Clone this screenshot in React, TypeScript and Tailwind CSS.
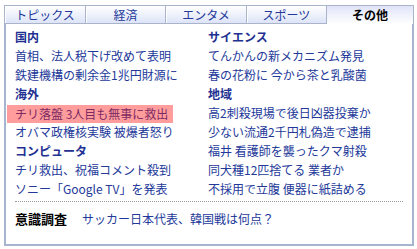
import React from 'react';

const tabs = ['トピックス', '経済', 'エンタメ', 'スポーツ', 'その他'];

type Row = { text: string; head?: boolean; hot?: boolean };

const left: Row[] = [
  { text: '国内', head: true },
  { text: '首相、法人税下げ改めて表明' },
  { text: '鉄建機構の剰余金1兆円財源に' },
  { text: '海外', head: true },
  { text: 'チリ落盤 3人目も無事に救出', hot: true },
  { text: 'オバマ政権核実験 被爆者怒り' },
  { text: 'コンピュータ', head: true },
  { text: 'チリ救出、祝福コメント殺到' },
  { text: 'ソニー「Google TV」を発表' },
];

const right: Row[] = [
  { text: 'サイエンス', head: true },
  { text: 'てんかんの新メカニズム発見' },
  { text: '春の花粉に 今から茶と乳酸菌' },
  { text: '地域', head: true },
  { text: '高2刺殺現場で後日凶器投棄か' },
  { text: '少ない流通2千円札偽造で逮捕' },
  { text: '福井 看護師を襲ったクマ射殺' },
  { text: '同犬種12匹捨てる 業者か' },
  { text: '不採用で立腹 便器に紙詰める' },
];

function Column({ rows }: { rows: Row[] }) {
  return (
    <div className="flex flex-col">
      {rows.map((r) => (
        <div key={r.text} className="h-[19px] flex items-center whitespace-nowrap">
          {r.head ? (
            <span className="font-bold text-[#1e3192]">{r.text}</span>
          ) : r.hot ? (
            <span className="-ml-[8px] pl-[8px] pr-[5px] h-[18px] mt-[3px] flex items-center bg-[#ff9c9c] text-[#7d2a63]">{r.text}</span>
          ) : (
            <span className="text-[#23399a]">{r.text}</span>
          )}
        </div>
      ))}
    </div>
  );
}

export default function App() {
  return (
    <div className="w-[417px] h-[249px] bg-white pt-[5px] pl-[4px]" style={{ fontFamily: '"Noto Sans CJK JP", "Liberation Sans", sans-serif' }}>
      <div className="w-[410px] text-[12px] leading-none">
        <div className="grid grid-cols-[82px_80px_81px_80px_87px] h-[19px]">
          {tabs.map((t, i) => {
            const active = i === tabs.length - 1;
            return (
              <div
                key={t}
                className={`flex items-center justify-center border-t border-r border-[#a9b4cb] ${i === 0 ? 'border-l' : ''} ${
                  active
                    ? 'bg-gradient-to-b from-[#e0e4f8] to-white font-bold text-black'
                    : 'border-b bg-gradient-to-b from-white to-[#dde4f7] text-[#23399a] shadow-[inset_1px_0_0_#ffffff]'
                }`}
              >
                {t}
              </div>
            );
          })}
        </div>
        <div className="h-[222px] border-l-2 border-r-2 border-b-2 border-[#a6b5d0] pt-[3px] pl-[9px] pr-[9px]">
          <div className="grid grid-cols-[193px_1fr]">
            <Column rows={left} />
            <Column rows={right} />
          </div>
          <div className="mt-[3px] border-t border-dotted border-[#9a9a9a] w-[388px]" />
          <div className="h-[19px] mt-[7px] flex items-center whitespace-nowrap">
            <span className="font-bold text-[13px] text-black w-[67px]">意識調査</span>
            <span className="text-[#23399a]">サッカー日本代表、韓国戦は何点？</span>
          </div>
        </div>
      </div>
    </div>
  );
}
